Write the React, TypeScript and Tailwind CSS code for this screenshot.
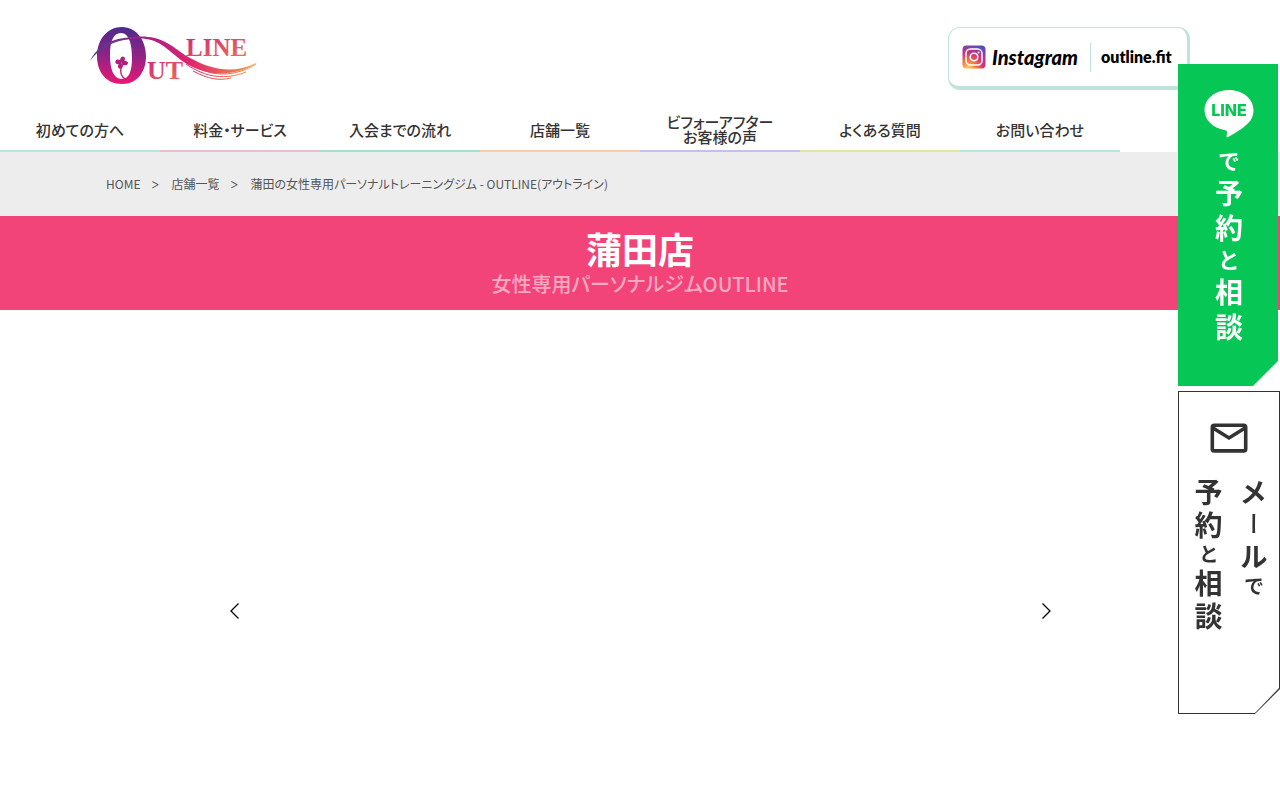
import React from "react";

const navItems = [
  { lines: ["初めての方へ"], border: "border-[#bfe3dc]" },
  { lines: ["料金・サービス"], border: "border-[#e6c1d3]" },
  { lines: ["入会までの流れ"], border: "border-[#addfca]" },
  { lines: ["店舗一覧"], border: "border-[#f6ccb2]" },
  { lines: ["ビフォーアフター", "お客様の声"], border: "border-[#c9bdea]" },
  { lines: ["よくある質問"], border: "border-[#e2e5a6]" },
  { lines: ["お問い合わせ"], border: "border-[#bfe3dc]" },
];

function Logo() {
  return (
    <svg viewBox="0 0 170 60" className="h-[60px] w-[170px]" role="img" aria-label="OUTLINE">
      <defs>
        <linearGradient id="ring" x1="0" y1="0" x2="0" y2="1">
          <stop offset="0" stopColor="#4c2b8c" />
          <stop offset="0.5" stopColor="#8f2385" />
          <stop offset="1" stopColor="#ea1777" />
        </linearGradient>
        <linearGradient id="word" x1="0" y1="0" x2="1" y2="1">
          <stop offset="0" stopColor="#cf2280" />
          <stop offset="1" stopColor="#ee7750" />
        </linearGradient>
        <linearGradient id="wave" gradientUnits="userSpaceOnUse" x1="0" y1="0" x2="168" y2="0">
          <stop offset="0" stopColor="#49408f" />
          <stop offset="0.35" stopColor="#a51f86" />
          <stop offset="0.6" stopColor="#e0256d" />
          <stop offset="1" stopColor="#f6a13c" />
        </linearGradient>
      </defs>
      <path
        fill="url(#ring)"
        fillRule="evenodd"
        d="M32 2C17 2 7 15 7 31s9 28 25 28 24-13 24-28S47 2 32 2ZM31 8c8 0 11 11 11 25 0 13-3 21-10 21-9 0-12-11-12-24S23 8 31 8Z"
      />
      <path
        fill="url(#wave)"
        d="M0 36C5 24 18 15 34 13c8-1 17-2 24-1 18 1 29 14 42 21 24 13 45 16 68 4-22 15-48 15-71 2C82 30 73 16 56 14c-6-1-14 0-22 1C19 18 8 25 0 36Z"
      />
      <path
        fill="none"
        stroke="url(#wave)"
        strokeWidth="1"
        d="M90 33c25 18 50 22 76 6M96 39c20 14 40 16 60 8M103 46c15 8 26 10 38 7"
      />
      <g fill="#b31d7e" transform="translate(1 1)">
        <ellipse cx="27.500" cy="36" rx="3.2" ry="2.3" transform="rotate(20 27.500 36)" />
        <ellipse cx="33.800" cy="37" rx="3.2" ry="2.3" transform="rotate(10 33.800 37)" />
        <ellipse cx="31.500" cy="33.500" rx="2.3" ry="3" transform="rotate(20 31.500 33.500)" />
        <ellipse cx="29.500" cy="40" rx="2.3" ry="2.8" transform="rotate(30 29.500 40)" />
      </g>
      <path d="M32 39c-2 6-2 13 5 16" fill="none" stroke="#cf1c7b" strokeWidth="1.4" />
      <text x="57" y="54" fontSize="26" fill="url(#word)" className="font-['Liberation_Serif',serif] font-bold">
        UT
      </text>
      <text x="96" y="31" fontSize="25" fill="url(#word)" className="font-['Liberation_Serif',serif] font-bold">
        LINE
      </text>
    </svg>
  );
}

function InstagramMark() {
  return (
    <svg viewBox="0 0 24 24" className="size-6 shrink-0" aria-hidden="true">
      <defs>
        <radialGradient id="insta" cx="0.25" cy="1" r="1.1">
          <stop offset="0" stopColor="#fdd45f" />
          <stop offset="0.3" stopColor="#f57c3a" />
          <stop offset="0.6" stopColor="#d33278" />
          <stop offset="1" stopColor="#514fb9" />
        </radialGradient>
      </defs>
      <rect x="0.500" y="0.500" width="23" height="23" rx="4" fill="url(#insta)" />
      <rect x="4" y="4" width="16" height="16" rx="4.5" fill="none" stroke="white" strokeWidth="1.5" />
      <circle cx="12" cy="12" r="3.8" fill="none" stroke="white" strokeWidth="1.5" />
      <circle cx="16.6" cy="7.4" r="1" fill="white" />
    </svg>
  );
}

function Big({ children }: { children: React.ReactNode }) {
  return <span className="text-[28px] leading-7">{children}</span>;
}

function Small({ children }: { children: React.ReactNode }) {
  return <span className="text-[22px] leading-7">{children}</span>;
}

export default function App() {
  return (
    <div className="min-h-screen bg-white font-['Noto_Sans_CJK_JP',sans-serif] text-[#333] [font-feature-settings:'palt']">
      <header>
        <div className="mx-auto flex h-[108px] max-w-[1100px] items-start justify-between pt-[27px]">
          <a href="#home" className="-mt-1 block pt-[2px]">
            <Logo />
          </a>
          <a
            href="#instagram"
            className="flex h-[63px] w-[242px] items-center gap-[6px] rounded-xl border border-r-3 border-b-4 border-[#bfe3dc] pl-[13px] text-black"
          >
            <InstagramMark />
            <span className="w-[92px] font-[Lato,sans-serif] text-[20px] leading-6 font-black italic">Instagram</span>
            <span className="h-[29px] w-px bg-[#bfe3dc]" />
            <span className="pl-1 font-[Lato,sans-serif] text-[16px] leading-6 font-extrabold">outline.fit</span>
          </a>
        </div>
        <nav aria-label="メイン" className="flex h-[44px]">
          {navItems.map((item) => (
            <a
              key={item.lines[0]}
              href="#menu"
              className={`flex w-1/8 flex-col items-center justify-center border-b-2 text-[15px] leading-[15px] font-medium ${item.border}`}
            >
              {item.lines.map((line) => (
                <span key={line}>{line}</span>
              ))}
            </a>
          ))}
        </nav>
      </header>

      <main>
        <nav aria-label="パンくず" className="bg-[#ededed] text-[#555]">
          <ol className="mx-auto flex h-16 max-w-[1068px] items-center gap-[10px] text-[12px] leading-4">
            <li><a href="#home">HOME</a></li>
            <li aria-hidden="true" className="w-[11px] font-[Inter,sans-serif] text-[14px] font-light">&gt;</li>
            <li><a href="#shops">店舗一覧</a></li>
            <li aria-hidden="true" className="w-[11px] font-[Inter,sans-serif] text-[14px] font-light">&gt;</li>
            <li>蒲田の女性専用パーソナルトレーニングジム - OUTLINE(アウトライン)</li>
          </ol>
        </nav>

        <h1 className="flex h-[94px] flex-col items-center bg-[#f34479] pt-3 text-white">
          <span className="text-[36px] leading-11 font-bold">
            <span className="block leading-10">蒲田店</span>
          </span>
          <span className="pt-1 text-[20px] leading-6 font-medium text-[#fba9c3]">女性専用パーソナルジムOUTLINE</span>
        </h1>

        <section aria-label="店舗写真" className="mx-auto flex h-[490px] max-w-[824px] items-center justify-between pt-[111px]">
          <button type="button" aria-label="前へ" className="flex h-6 w-3 items-center justify-center">
            <svg viewBox="0 0 12 18" className="h-[18px] w-3" fill="none" stroke="black" strokeWidth="1.3">
              <path d="m10.500 1.500-7.500 7.500 7.500 7.500" />
            </svg>
          </button>
          <button type="button" aria-label="次へ" className="flex h-6 w-3 items-center justify-center">
            <svg viewBox="0 0 12 18" className="h-[18px] w-3" fill="none" stroke="black" strokeWidth="1.3">
              <path d="m2.500 1.500 7.500 7.500-7.500 7.500" />
            </svg>
          </button>
        </section>
      </main>

      <aside className="fixed top-16 right-0 flex w-[102px] flex-col gap-[5px] font-bold">
        <a
          href="#line"
          className="flex h-[322px] w-[100px] flex-col items-center bg-[#06c755] pt-[26px] pl-[2px] text-white [clip-path:polygon(0_0,100%_0,100%_297px,75px_100%,0_100%)]"
        >
          <svg viewBox="0 0 50 48" className="h-12 w-[50px]" role="img" aria-label="LINE">
            <path fill="white" d="M25 0C11 0 .5 9 .5 20.300 .5 30 9 38 20.500 40c2.500.6 2.800 1.300 2.400 4l-.4 2.300c-.1.900.6 1.200 1.600.7C31 43.500 42 36.500 46.500 30.500c2-3 3-6.500 3-10.200C49.500 9 39 0 25 0Z" />
            <text x="25" y="26" textAnchor="middle" fontSize="16" fill="#06c755" className="font-[Inter,sans-serif] font-extrabold">
              LINE
            </text>
          </svg>
          <span className="mt-3 flex items-center gap-[7px] [writing-mode:vertical-rl]">
            <Small>で</Small>
            <Big>予</Big>
            <Big>約</Big>
            <Small>と</Small>
            <Big>相</Big>
            <Big>談</Big>
          </span>
        </a>
        <a href="#mail" className="block bg-[#333] p-px [clip-path:polygon(0_0,100%_0,100%_298px,77px_100%,0_100%)]">
          <span className="flex h-[321px] flex-col items-center bg-white pt-[31px] [clip-path:polygon(0_0,100%_0,100%_296px,76px_100%,0_100%)]">
            <svg viewBox="0 0 38 30" className="h-[30px] w-[38px]" fill="none" stroke="#333" strokeWidth="3.600" aria-hidden="true">
              <rect x="2.300" y="2.300" width="33.400" height="25.600" rx="2" />
              <path d="m3 5 16 10L35 5" />
            </svg>
            <span className="mt-[25px] flex flex-row-reverse gap-[17px] pl-1">
              <span className="flex items-center gap-[6px] [writing-mode:vertical-rl]">
                <Big>メ</Big>
                <span className="text-[24px] leading-7 font-medium">ー</span>
                <Big>ル</Big>
                <span className="text-[20px] leading-7">で</span>
              </span>
              <span className="flex items-center gap-[5px] [writing-mode:vertical-rl]">
                <Big>予</Big>
                <Big>約</Big>
                <span className="text-[20px] leading-7">と</span>
                <Big>相</Big>
                <Big>談</Big>
              </span>
            </span>
          </span>
        </a>
      </aside>
    </div>
  );
}
